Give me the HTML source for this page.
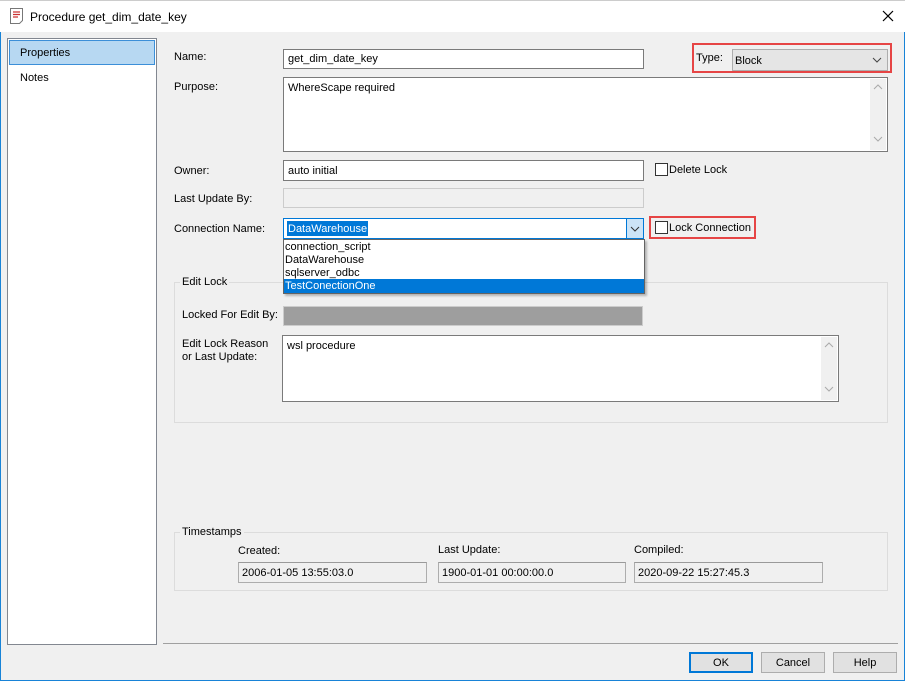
<!DOCTYPE html>
<html><head><style>
*{box-sizing:border-box;margin:0;padding:0}
body{width:905px;height:681px;background:#f0f0f0;font-family:"Liberation Sans",sans-serif;font-size:11px;color:#000;position:relative;overflow:hidden}
.a{position:absolute}
.in{position:absolute;background:#fff;border:1px solid #7a7a7a;padding:3px 4px 2px;white-space:nowrap}
.lb{position:absolute;white-space:nowrap}
.cb{position:absolute;width:13px;height:13px;border:1px solid #333;background:#fff}
.grp{position:absolute;border:1px solid #dcdcdc}
.gl{position:absolute;background:#f0f0f0;padding:0 2px;white-space:nowrap}
.btn{position:absolute;height:21px;border:1px solid #adadad;background:#e1e1e1;text-align:center;line-height:20px}
.ro{position:absolute;border:1px solid #adadad;border-top-color:#9a9a9a;background:#f0f0f0;padding:4px 3px 2px;white-space:nowrap}
</style></head><body>
<div class="a" style="left:0;top:0;width:905px;height:681px;border:1px solid #1883d7;border-top:none"></div>
<div class="a" style="left:0;top:0;width:905px;height:32px;background:#fff;border-top:1px solid #ccc"></div>
<svg class="a" style="left:9px;top:7px" width="16" height="18" viewBox="0 0 16 18"><path d="M1.5 1.5h12v12l-3 3h-9z" fill="#fff" stroke="#777"/><path d="M4 5h7M4 7.5h7M4 10h5" stroke="#c33" stroke-width="1.2"/></svg>
<div class="lb" style="left:30px;top:10px;font-size:12px">Procedure get_dim_date_key</div>
<svg class="a" style="left:882px;top:10px" width="12" height="12"><path d="M1 1l10 10M11 1L1 11" stroke="#000" stroke-width="1.2"/></svg>

<div class="a" style="left:7px;top:38px;width:150px;height:607px;background:#fff;border:1px solid #828790"></div>
<div class="a" style="left:9px;top:40px;width:146px;height:25px;background:#b7d8f2;border:1px solid #3c8fd8"></div>
<div class="lb" style="left:20px;top:47px">Properties</div>
<div class="lb" style="left:20px;top:72px">Notes</div>

<div class="lb" style="left:174px;top:51px">Name:</div>
<div class="in" style="left:283px;top:49px;width:361px;height:20px">get_dim_date_key</div>
<div class="a" style="left:692px;top:43px;width:200px;height:30px;border:2px solid #e64545"></div>
<div class="lb" style="left:696px;top:52px">Type:</div>
<div class="a" style="left:732px;top:49px;width:156px;height:22px;background:#e5e5e5;border:1px solid #adadad;padding:5px 2px">Block</div>
<svg class="a" style="left:872px;top:57px" width="10" height="6"><path d="M1 1l4 4 4-4" stroke="#444" fill="none"/></svg>

<div class="lb" style="left:174px;top:81px">Purpose:</div>
<div class="in" style="left:283px;top:77px;width:605px;height:75px;padding:4px 4px">WhereScape required</div>
<div class="a" style="left:870px;top:79px;width:16px;height:71px;background:#f0f0f0"></div>
<svg class="a" style="left:873px;top:84px" width="10" height="60"><path d="M1 5l4-4 4 4M1 53l4 4 4-4" stroke="#aaa" fill="none"/></svg>

<div class="lb" style="left:174px;top:165px">Owner:</div>
<div class="in" style="left:283px;top:160px;width:361px;height:21px;padding-top:4px">auto initial</div>
<div class="cb" style="left:655px;top:163px"></div>
<div class="lb" style="left:669px;top:164px">Delete Lock</div>

<div class="lb" style="left:174px;top:193px">Last Update By:</div>
<div class="a" style="left:283px;top:188px;width:361px;height:20px;border:1px solid #ccc;background:#f0f0f0"></div>

<div class="lb" style="left:174px;top:223px">Connection Name:</div>
<div class="a" style="left:283px;top:218px;width:361px;height:21px;background:#fff;border:1px solid #0078d7"></div>
<div class="a" style="left:287px;top:221px;height:15px;background:#0078d7;color:#fff;padding:1px 1px;line-height:14px">DataWarehouse</div>
<div class="a" style="left:626px;top:219px;width:17px;height:19px;background:#cce4f7;border-left:1px solid #0078d7"></div>
<svg class="a" style="left:630px;top:226px" width="10" height="6"><path d="M1 1l4 4 4-4" stroke="#333" fill="none"/></svg>
<div class="a" style="left:649px;top:216px;width:107px;height:23px;border:2px solid #e64545"></div>
<div class="cb" style="left:655px;top:221px"></div>
<div class="lb" style="left:669px;top:222px">Lock Connection</div>

<div class="grp" style="left:174px;top:282px;width:714px;height:141px"></div>
<div class="gl" style="left:180px;top:276px">Edit Lock</div>
<div class="lb" style="left:182px;top:309px">Locked For Edit By:</div>
<div class="a" style="left:283px;top:306px;width:360px;height:20px;background:#9e9e9e;border:1px solid #ccc"></div>
<div class="lb" style="left:182px;top:338px;line-height:13px">Edit Lock Reason<br>or Last Update:</div>
<div class="in" style="left:282px;top:335px;width:557px;height:67px;padding:4px 4px">wsl procedure</div>
<div class="a" style="left:821px;top:337px;width:16px;height:63px;background:#f0f0f0"></div>
<svg class="a" style="left:824px;top:342px" width="10" height="52"><path d="M1 5l4-4 4 4M1 45l4 4 4-4" stroke="#aaa" fill="none"/></svg>

<div class="a" style="left:283px;top:239px;width:362px;height:55px;background:#fff;border:1px solid #646464;box-shadow:2px 2px 2px rgba(0,0,0,.25)"></div>
<div class="lb" style="left:285px;top:241px;line-height:13px">connection_script<br>DataWarehouse<br>sqlserver_odbc</div>
<div class="a" style="left:284px;top:279px;width:360px;height:14px;background:#0078d7;color:#fff;padding-left:1px;line-height:14px">TestConectionOne</div>

<div class="grp" style="left:174px;top:532px;width:714px;height:59px"></div>
<div class="gl" style="left:180px;top:526px">Timestamps</div>
<div class="lb" style="left:238px;top:545px">Created:</div>
<div class="lb" style="left:438px;top:544px">Last Update:</div>
<div class="lb" style="left:634px;top:544px">Compiled:</div>
<div class="ro" style="left:238px;top:562px;width:189px;height:21px">2006-01-05 13:55:03.0</div>
<div class="ro" style="left:438px;top:562px;width:188px;height:21px">1900-01-01 00:00:00.0</div>
<div class="ro" style="left:634px;top:562px;width:189px;height:21px">2020-09-22 15:27:45.3</div>

<div class="a" style="left:163px;top:643px;width:735px;height:1px;background:#a0a0a0"></div>
<div class="btn" style="left:689px;top:652px;width:64px;border:2px solid #0078d7;line-height:18px">OK</div>
<div class="btn" style="left:761px;top:652px;width:64px">Cancel</div>
<div class="btn" style="left:833px;top:652px;width:64px">Help</div>
</body></html>
